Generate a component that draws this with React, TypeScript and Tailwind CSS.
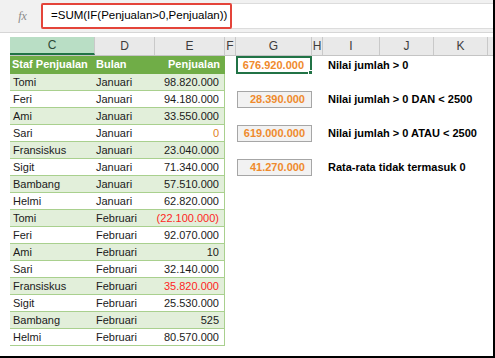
import React from 'react';

type Row = { name: string; month: string; value: string; tone?: 'red' | 'orange' };

const rows: Row[] = [
  { name: 'Tomi', month: 'Januari', value: '98.820.000' },
  { name: 'Feri', month: 'Januari', value: '94.180.000' },
  { name: 'Ami', month: 'Januari', value: '33.550.000' },
  { name: 'Sari', month: 'Januari', value: '0', tone: 'orange' },
  { name: 'Fransiskus', month: 'Januari', value: '23.040.000' },
  { name: 'Sigit', month: 'Januari', value: '71.340.000' },
  { name: 'Bambang', month: 'Januari', value: '57.510.000' },
  { name: 'Helmi', month: 'Januari', value: '62.820.000' },
  { name: 'Tomi', month: 'Februari', value: '(22.100.000)', tone: 'red' },
  { name: 'Feri', month: 'Februari', value: '92.070.000' },
  { name: 'Ami', month: 'Februari', value: '10' },
  { name: 'Sari', month: 'Februari', value: '32.140.000' },
  { name: 'Fransiskus', month: 'Februari', value: '35.820.000', tone: 'red' },
  { name: 'Sigit', month: 'Februari', value: '25.530.000' },
  { name: 'Bambang', month: 'Februari', value: '525' },
  { name: 'Helmi', month: 'Februari', value: '80.570.000' },
];

// results shown in column G, keyed by sheet row (0 = table header row)
const results: Record<number, { value: string; label: string; active?: boolean }> = {
  0: { value: '676.920.000', label: 'Nilai jumlah > 0', active: true },
  2: { value: '28.390.000', label: 'Nilai jumlah > 0 DAN < 2500' },
  4: { value: '619.000.000', label: 'Nilai jumlah > 0 ATAU < 2500' },
  6: { value: '41.270.000', label: 'Rata-rata tidak termasuk 0' },
};

const cols = [
  { key: 'C', w: 'w-[85px]', active: true },
  { key: 'D', w: 'w-[60px]' },
  { key: 'E', w: 'w-[70px]' },
  { key: 'F', w: 'w-[11px]' },
  { key: 'G', w: 'w-[76px]' },
  { key: 'H', w: 'w-[11px]' },
  { key: 'I', w: 'w-[57px]' },
  { key: 'J', w: 'w-[54px]' },
  { key: 'K', w: 'w-[54px]' },
];

const ResultCell: React.FC<{ row: number }> = ({ row }) => {
  const r = results[row];
  if (!r) return <div className="w-[76px] shrink-0" />;
  if (r.active) {
    return (
      <div className="relative w-[76px] shrink-0 h-full border-2 border-[#217346] bg-white flex items-center justify-end pr-[6px] font-bold text-[#ef8a2c]">
        {r.value}
        <span className="absolute -right-[3px] -bottom-[3px] w-[5px] h-[5px] bg-[#217346] border border-white" />
      </div>
    );
  }
  return (
    <div className="w-[76px] shrink-0 h-full py-[0px] pl-[1px]">
      <div className="h-full border border-[#a6a6a6] bg-[#f2f2f2] flex items-center justify-end pr-[6px] font-bold text-[#ef8a2c]">
        {r.value}
      </div>
    </div>
  );
};

const SideCells: React.FC<{ row: number }> = ({ row }) => {
  const r = results[row];
  return (
    <>
      <div className="w-[11px] shrink-0" />
      <ResultCell row={row} />
      <div className="w-[11px] shrink-0" />
      <div className="flex-1 flex items-center pl-[5px] font-bold text-black whitespace-nowrap">
        {r ? r.label : ''}
      </div>
    </>
  );
};

export default function App() {
  return (
    <div className="w-[495px] h-[358px] bg-white border-r-2 border-b-2 border-black overflow-hidden font-['Liberation_Sans',Arial,sans-serif] text-[11px] text-[#1b1b1b]">
      {/* formula bar */}
      <div className="h-[33px] bg-[#f1f1f1] border-b border-[#d6d6d6] flex items-center">
        <div className="w-[41px] h-full flex items-center justify-center">
          <span className="font-['Liberation_Serif',serif] italic text-[12px] text-[#8a8a8a] pl-[4px]">fx</span>
        </div>
        <div className="flex-1 h-[26px] bg-white border-y border-[#dcdcdc] flex items-stretch">
          <div className="w-[191px] border-2 border-[#e4443a] rounded-[2px] flex items-center pl-[8px] text-[11.5px] text-black -my-[1px]">
            =SUM(IF(Penjualan&gt;0,Penjualan))
          </div>
        </div>
      </div>

      <div className="h-[4px]" />

      {/* column headers */}
      <div className="flex h-[19px] pl-[10px]">
        <div className="flex flex-1 bg-[#e9e9e9] border-b border-[#c4c4c4]">
          {cols.map((c) => (
            <div
              key={c.key}
              className={`${c.w} shrink-0 flex items-center justify-center border-r border-[#c9c9c9] text-[12px] ${
                c.active ? 'bg-[#b9dec5] text-[#2d4a37] border-b-2 border-b-[#217346]' : 'text-[#3d3d3d]'
              }`}
            >
              {c.key}
            </div>
          ))}
          <div className="flex-1" />
        </div>
      </div>

      {/* table header row */}
      <div className="flex h-[18px] pl-[10px]">
        <div className="w-[215px] shrink-0 flex bg-[#70ad47] text-white font-bold border-b border-[#70ad47]">
          <div className="w-[85px] flex items-center pl-[2px] whitespace-nowrap">Staf Penjualan</div>
          <div className="w-[60px] flex items-center pl-[1px]">Bulan</div>
          <div className="w-[70px] flex items-center justify-end pr-[5px]">Penjualan</div>
        </div>
        <SideCells row={0} />
      </div>

      {rows.map((r, i) => (
        <div key={i} className="flex h-[17px] pl-[10px]">
          <div
            className={`w-[215px] shrink-0 flex border-b border-r border-[#a9d08e] ${
              i % 2 === 0 ? 'bg-[#e2efda]' : 'bg-white'
            }`}
          >
            <div className="w-[85px] flex items-center pl-[3px]">{r.name}</div>
            <div className="w-[60px] flex items-center pl-[1px]">{r.month}</div>
            <div
              className={`flex-1 flex items-center justify-end pr-[5px] ${
                r.tone === 'red' ? 'text-[#ff1f1f]' : r.tone === 'orange' ? 'text-[#e0801f]' : ''
              }`}
            >
              {r.value}
            </div>
          </div>
          <SideCells row={i + 1} />
        </div>
      ))}
    </div>
  );
}
